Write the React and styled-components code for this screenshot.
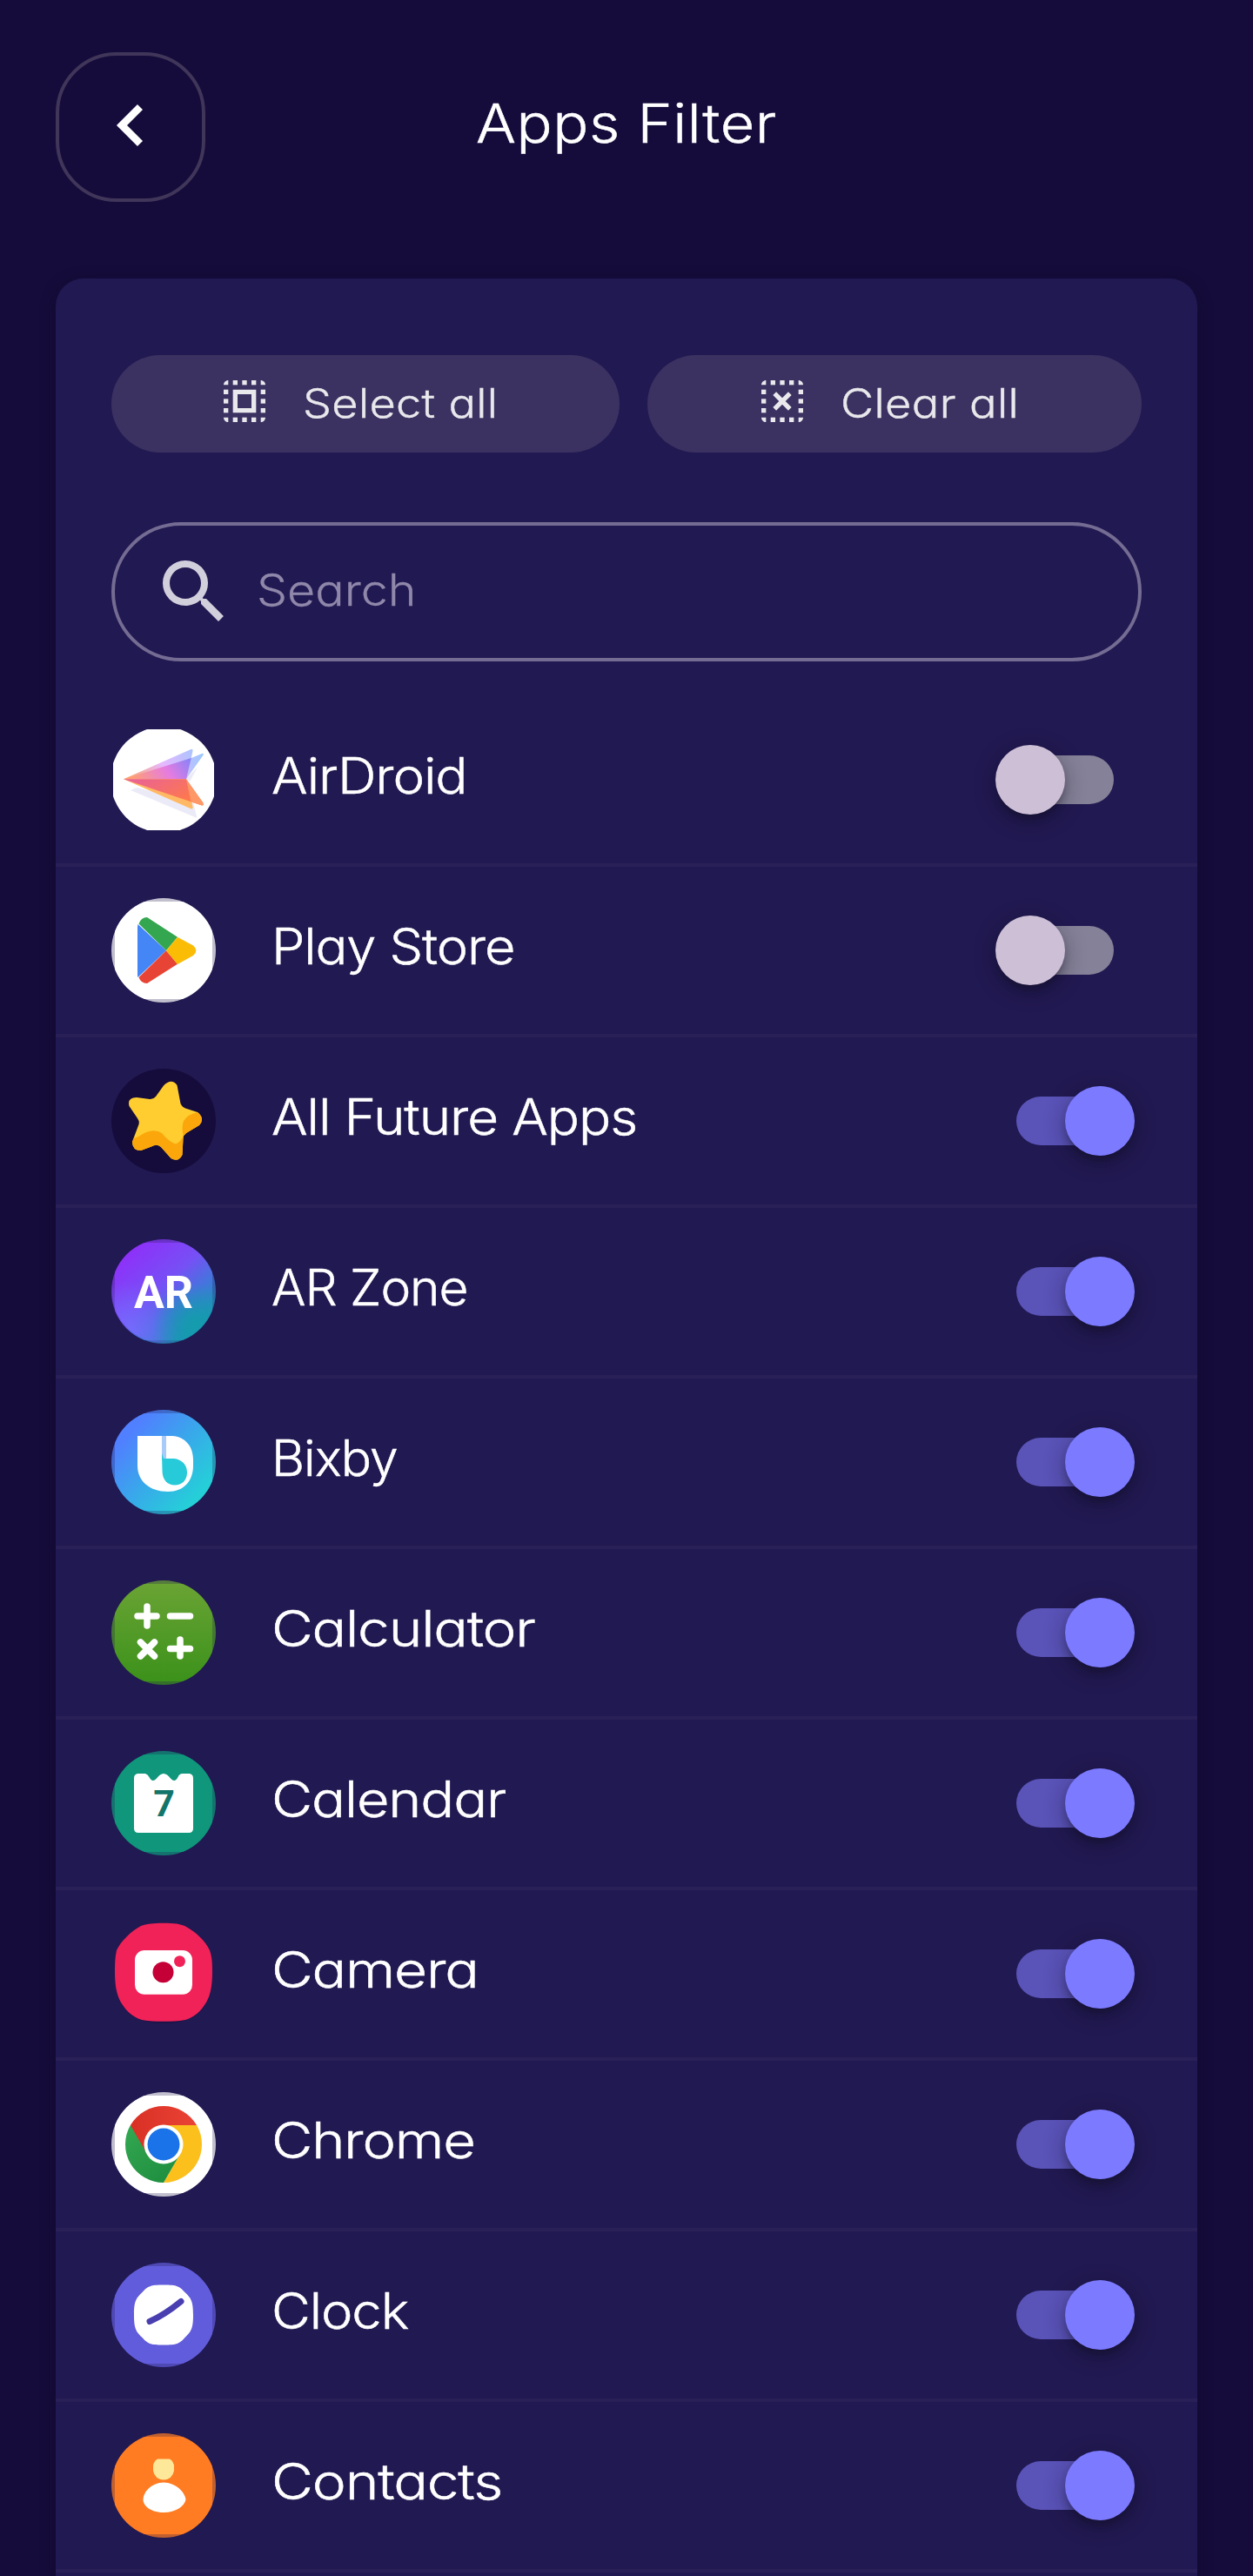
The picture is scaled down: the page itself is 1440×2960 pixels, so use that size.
import React, { useState } from "react";
import styled, { createGlobalStyle } from "styled-components";

const GlobalStyle = createGlobalStyle`
  *, *::before, *::after { box-sizing: border-box; }
  html, body { margin: 0; padding: 0; background: #150c3b; }
  body {
    font-family: Inter, "Open Sans", sans-serif;
    font-weight: 300;
    font-feature-settings: "cv11" 1, "kern" 1;
    color: #fff;
  }
  button, input { font: inherit; font-feature-settings: inherit; color: inherit; }
  svg { display: block; flex: none; }
`;

const Screen = styled.main`
  width: 1440px;
  height: 2960px;
  overflow: hidden;
  padding: 0 64px;
  background: #150c3b;
`;

const Header = styled.header`
  display: grid;
  grid-template-columns: 172px 1fr 172px;
  height: 320px;
  padding-top: 60px;
`;

const BackButton = styled.button`
  display: flex;
  align-items: center;
  justify-content: center;
  width: 172px;
  height: 172px;
  padding: 0 2px 4px 0;
  border: 4px solid #403659;
  border-radius: 70px;
  background: transparent;
`;

const Title = styled.h1`
  margin: 0;
  padding-bottom: 9px;
  height: 172px;
  line-height: 163px;
  text-align: center;
  font-size: 61.5px;
  font-weight: 300;
  letter-spacing: 0.5px;
  -webkit-text-stroke: 0.5px currentColor;
  transform: scaleX(1.11);
`;

const Panel = styled.section`
  height: 2680px;
  padding-top: 88px;
  border-radius: 32px 32px 0 0;
  background: #211951;
  box-shadow: 0 4px 16px rgba(16, 10, 40, 0.55);
`;

const Actions = styled.div`
  display: grid;
  grid-template-columns: 584px 568px;
  gap: 32px;
  padding: 0 64px;
`;

const PillButton = styled.button`
  display: flex;
  align-items: center;
  gap: 35px;
  height: 112px;
  padding: 0 0 0 ${(p) => p.$inset}px;
  border: 0;
  border-radius: 56px;
  background: #3b3261;
  color: #e9e8ec;
  font-size: 46px;
  font-weight: 300;
  letter-spacing: 0.3px;

  svg { margin-bottom: 7px; }
`;

const PillLabel = styled.span`
  padding-bottom: 2px;
  -webkit-text-stroke: 0.4px currentColor;
  transform: scaleX(${(p) => p.$stretch});
  transform-origin: left;
`;

const SearchBox = styled.label`
  display: flex;
  align-items: center;
  gap: 24px;
  height: 160px;
  margin: 80px 64px 40px;
  padding: 0 60px 0 43px;
  border: 4px solid #756c93;
  border-radius: 80px;
  color: #d2cfdc;
`;

const SearchInput = styled.input`
  width: 800px;
  height: 100px;
  padding: 0 0 5px;
  border: 0;
  outline: 0;
  background: transparent;
  font-size: 50px;
  letter-spacing: 0;
  transform: scaleX(1.11);
  transform-origin: left;

  &::placeholder {
    color: #9088aa;
    opacity: 1;
    -webkit-text-stroke: 0.3px #9088aa;
  }
`;

const List = styled.ul`
  margin: 0;
  padding: 0;
  list-style: none;
`;

const Row = styled.li`
  display: flex;
  align-items: center;
  height: 196px;
  padding: 0 96px 0 64px;
  border-bottom: 4px solid #292057;
`;

const AppName = styled.span`
  flex: 1;
  margin-left: 64px;
  padding-bottom: 8px;
  font-size: 57px;
  line-height: 80px;
  white-space: nowrap;
  letter-spacing: -1px;
  -webkit-text-stroke: 0.5px currentColor;
  transform: scaleX(${(p) => p.$stretch});
  transform-origin: left;
`;

const Track = styled.button`
  display: flex;
  align-items: center;
  justify-content: ${(p) => (p.$on ? "flex-end" : "flex-start")};
  width: 112px;
  height: 56px;
  padding: 0;
  border: 0;
  border-radius: 28px;
  background: ${(p) => (p.$on ? "#5a53b8" : "#858198")};
`;

const Thumb = styled.span`
  flex: none;
  width: 80px;
  height: 80px;
  margin: 0 -24px;
  border-radius: 50%;
  background: ${(p) => (p.$on ? "#7c7aff" : "#cdbfd6")};
  box-shadow: 0 8px 10px -4px rgba(16, 14, 30, 0.45), 0 6px 24px rgba(16, 14, 30, 0.4);
`;

const DOTS = [];
[3, 7, 11, 15, 19].forEach((x) =>
  [3, 7, 11, 15, 19].forEach((y) => {
    if (x === 3 || x === 19 || y === 3 || y === 19) DOTS.push([x, y]);
  })
);
const CORNERS = {
  "3,3": "M5 3v2H3c0-1.1.9-2 2-2z",
  "19,3": "M19 3v2h2c0-1.1-.9-2-2-2z",
  "3,19": "M3 19h2v2c-1.1 0-2-.9-2-2z",
  "19,19": "M19 19h2c0 1.1-.9 2-2 2z",
};

function SelectionIcon({ children }) {
  return (
    <svg width="64" height="64" viewBox="0 0 24 24" fill="currentColor">
      {DOTS.map(([x, y]) => (
        <path key={`${x}-${y}`} d={CORNERS[`${x},${y}`] || `M${x} ${y}h2v2h-2z`} />
      ))}
      {children}
    </svg>
  );
}

function Badge({ id, fill, defs, children }) {
  return (
    <svg width="120" height="120" viewBox="0 0 120 120">
      <defs>
        <clipPath id={`${id}-clip`}>
          <rect x="4" y="4" width="112" height="112" />
        </clipPath>
        {defs}
      </defs>
      <circle cx="60" cy="60" r="60" fill={fill} opacity="0.72" />
      <circle cx="60" cy="60" r="60" fill={fill} clipPath={`url(#${id}-clip)`} />
      {children}
    </svg>
  );
}

const AirDroidIcon = () => (
  <svg width="120" height="120" viewBox="0 0 120 120">
    <defs>
      <clipPath id="air-clip">
        <rect x="2" y="2" width="116" height="116" />
      </clipPath>
      <linearGradient id="air-back" x1="14" y1="59" x2="104" y2="26" gradientUnits="userSpaceOnUse">
        <stop offset="0" stopColor="#ffa35c" />
        <stop offset="0.5" stopColor="#e6b8ff" />
        <stop offset="1" stopColor="#9cc8ff" />
      </linearGradient>
      <linearGradient id="air-front" x1="30" y1="70" x2="90" y2="30" gradientUnits="userSpaceOnUse">
        <stop offset="0" stopColor="#ffa070" />
        <stop offset="0.55" stopColor="#e67ce0" />
        <stop offset="1" stopColor="#7f83fa" />
      </linearGradient>
      <linearGradient id="air-low" x1="0" y1="0" x2="1" y2="0.6">
        <stop offset="0" stopColor="#e8609c" />
        <stop offset="1" stopColor="#ff7a48" />
      </linearGradient>
    </defs>
    <circle cx="60" cy="60" r="61" fill="#fff" clipPath="url(#air-clip)" />
    <path d="M24 69 L86 95 L98.500 104 L94 86z M22 72 L98.500 104 L93 86 L30 69z M86 59 L99.500 45 L90 62z" fill="#ebeaf7" />
    <path d="M14 59.300 L92 24.700 Q94 24.500 93.500 27 L91.800 35 L104.500 29.700 Q107 29.700 105 32.500 L86 59.300z" fill="url(#air-back)" />
    <path d="M14 59.300 L91.800 35 L86 59.300z" fill="url(#air-front)" />
    <path d="M14 59.300 L92 93.500 Q94 93.500 93.500 91 L86 59.300z" fill="#ffb964" />
    <path d="M14 59.300 L104 89.500 Q107 89.500 105 86 L86 59.300z" fill="url(#air-low)" />
    <path d="M86 59.300 L91.500 85.300 L104 89.500 Q107 89.500 105 86z" fill="#ff9866" />
  </svg>
);

const PlayIcon = () => (
  <Badge id="play" fill="#fff">
    <path d="M30.500 30 L63 60.300 L30.500 91 Q30 90 30 88 V33z" fill="#4486f6" />
    <path d="M31.500 29.500 Q34 22 41 22 L76 44.700 L63 60.300z" fill="#34a650" />
    <path d="M31.500 91 Q34 98 41 98 L76 75.700 L63 60.300z" fill="#e84435" />
    <path d="M76 44.700 L94 54.500 Q101 60.300 94 66 L76 76 L63 60.300z" fill="#fbbc06" />
  </Badge>
);

const STAR =
  "M60 19.500 Q69 10.500 75.500 19 L79.500 40 Q81 44 85 45.500 L99 50 Q108 57 101 65 L86 74 Q83 76 82.500 80 L81.500 99 Q77 108 68.500 103 L57 90 Q52 86 46 89.500 L34 94 Q24 94 24 84 L31.500 64 Q32.500 60.500 30 57 L20.500 43 Q18 33 29 33 L44 35 Q48 35.500 51 32z";

const StarIcon = () => (
  <svg width="120" height="120" viewBox="0 0 120 120">
    <defs>
      <clipPath id="star-clip">
        <path d={STAR} />
      </clipPath>
    </defs>
    <circle cx="60" cy="60" r="60" fill="#150c3b" />
    <g clipPath="url(#star-clip)">
      <rect width="120" height="120" fill="#ffcd30" />
      <path d="M100 50 Q88 52 83 60 Q80 68 83 78 L112 70z" fill="#fba60b" />
      <path d="M18 81 Q28 81 36 75 Q49 68 58 74 Q66 84 74 86.500 Q80 84 83 76 L86 112 L16 110z" fill="#fba60b" />
    </g>
  </svg>
);

const ArIcon = () => (
  <Badge
    id="ar"
    fill="url(#ar-bg)"
    defs={
      <>
        <linearGradient id="ar-bg" x1="0.15" y1="0.1" x2="0.85" y2="0.9">
          <stop offset="0" stopColor="#8f2ff9" />
          <stop offset="0.45" stopColor="#7650f5" />
          <stop offset="0.7" stopColor="#4276dc" />
          <stop offset="1" stopColor="#129cac" />
        </linearGradient>
        <radialGradient id="ar-low" cx="0.15" cy="0.9" r="0.5">
          <stop offset="0" stopColor="#786cff" stopOpacity="0.9" />
          <stop offset="1" stopColor="#786cff" stopOpacity="0" />
        </radialGradient>
        <radialGradient id="ar-teal" cx="0.8" cy="0.82" r="0.4">
          <stop offset="0" stopColor="#149cad" />
          <stop offset="1" stopColor="#149cad" stopOpacity="0" />
        </radialGradient>
      </>
    }
  >
    <circle cx="60" cy="60" r="59" fill="url(#ar-low)" />
    <circle cx="60" cy="60" r="59" fill="url(#ar-teal)" />
    <text x="26" y="78.500" fill="#fff" fontFamily="Roboto, sans-serif" fontWeight="700" fontSize="51" textLength="68" lengthAdjust="spacingAndGlyphs">
      AR
    </text>
  </Badge>
);

const BixbyIcon = () => (
  <Badge
    id="bixby"
    fill="url(#bixby-bg)"
    defs={
      <linearGradient id="bixby-bg" x1="0.15" y1="0.25" x2="0.8" y2="0.85">
        <stop offset="0" stopColor="#5080ff" />
        <stop offset="0.5" stopColor="#38a9ea" />
        <stop offset="1" stopColor="#25cfd8" />
      </linearGradient>
    }
  >
    <path d="M30 30 H70 C85 31 94 42 94 58 V64 C94 82 83 94 65 94 C44 94 30 82 30 64z" fill="#fff" />
    <path d="M58 30h5v28h-5z" fill="#a9cbfa" />
    <path d="M60 56 H72 C81 57 87 63 87 72 C87 81 81 86.500 73 86.500 C64 86.500 58.500 80 58.500 70 L58 50z" fill="#27cad9" />
  </Badge>
);

const CalculatorIcon = () => (
  <Badge
    id="calc"
    fill="url(#calc-bg)"
    defs={
      <linearGradient id="calc-bg" x1="0" y1="0" x2="0" y2="1">
        <stop offset="0" stopColor="#6ba435" />
        <stop offset="1" stopColor="#3a911a" />
      </linearGradient>
    }
  >
    <g stroke="#fff" strokeWidth="7.500" strokeLinecap="round">
      <path d="M30 41h22M41 30v22M67.500 41h23M33.500 71l16 16M49.500 71l-16 16M67.500 78.500h23M79 68v19" />
    </g>
  </Badge>
);

const CalendarIcon = () => (
  <Badge id="cal" fill="#0f967b">
    <path d="M30 26 H39 Q42 27 43.500 30 Q47 37 51.500 32 Q56 26 60 26 Q64 26 68.500 32 Q73 37 76.500 30 Q78 26 82 26 H90 Q94 27 94 31 V89 Q94 94 89 94 H31 Q26 94 26 89 V31 Q26 27 30 26z" fill="#fff" />
    <text x="60.500" y="75" textAnchor="middle" fill="#137469" fontFamily="Roboto, sans-serif" fontWeight="700" fontSize="43">
      7
    </text>
  </Badge>
);

const CameraIcon = () => (
  <svg width="120" height="120" viewBox="0 0 120 120">
    <path d="M60 5 C98 5 116 23 116 61 C116 99 98 117 60 117 C22 117 4 99 4 61 C4 23 22 5 60 5z" fill="#150c3b" opacity="0.35" />
    <path d="M60 1.700 C72 1.700 80 2.500 86 6 C97 12 108 22 113 33 C116 42 116 49 116 58 C116 74 114 84 109 93 C103 103 95 110 85 113 C77 114.700 69 114.700 60 114.700 C51 114.700 43 114.700 35 113 C25 110 17 103 11 93 C6 84 4 74 4 58 C4 49 4 42 6 33 C11 22 23 11 34 5 C40 2.500 48 1.700 60 1.700z" fill="#f02257" />
    <rect x="27" y="33" width="66" height="50.700" rx="11" fill="#fff" />
    <circle cx="59.500" cy="58.300" r="12" fill="#c40037" />
    <circle cx="78.500" cy="45.700" r="6.500" fill="#f02257" />
  </svg>
);

const ChromeIcon = () => (
  <Badge
    id="chrome"
    fill="#fff"
    defs={
      <>
        <linearGradient id="chrome-red" x1="0" y1="0" x2="1" y2="0">
          <stop offset="0" stopColor="#d93025" />
          <stop offset="1" stopColor="#ea4335" />
        </linearGradient>
        <linearGradient id="chrome-green" x1="0" y1="0" x2="0.8" y2="1">
          <stop offset="0" stopColor="#34a853" />
          <stop offset="1" stopColor="#1e8e3e" />
        </linearGradient>
      </>
    }
  >
    <path d="M60 60 L98.100 38 A44 44 0 0 1 60 104 L79 71z M60 38 H98.100 L79 71z" fill="#fcc01c" />
    <path d="M60 60 L21.900 38 A44 44 0 0 0 60 104 L79.100 71z" fill="url(#chrome-green)" />
    <path d="M21.900 38 A44 44 0 0 1 98.100 38 H60 L41 71z" fill="url(#chrome-red)" />
    <circle cx="60" cy="60" r="22.500" fill="#fff" />
    <circle cx="60" cy="60" r="18.500" fill="#1a73e8" />
  </Badge>
);

const ClockIcon = () => (
  <Badge id="clock" fill="#615cdb">
    <path d="M60 25.500 C76 25.500 78 27 84.500 34 C92 41 94 45 94 60 C94 75 92 79 84.500 86 C78 93 76 94.500 60 94.500 C44 94.500 42 93 35.500 86 C28 79 26 75 26 60 C26 45 28 41 35.500 34 C42 27 44 25.500 60 25.500z" fill="#fff" />
    <path d="M44 67.500 Q61 60 80 44.500" fill="none" stroke="#4a3fb0" strokeWidth="7" strokeLinecap="round" />
  </Badge>
);

const ContactsIcon = () => (
  <Badge id="contacts" fill="#ff7c22">
    <path d="M53 29.500 H67 Q72 33 72 38 V43 Q70 53 60 53.500 Q50 53 48 43 V38 Q48 33 53 29.500z" fill="#fde89a" />
    <path d="M60 56.500 C74 57 84 67 85.500 76 C84 84 74 91 60 91 C46 91 36.500 84 36.500 76 C37 67 46 57 60 56.500z" fill="#fff" />
  </Badge>
);

const APPS = [
  { name: "AirDroid", Icon: AirDroidIcon, on: false, stretch: 1.085 },
  { name: "Play Store", Icon: PlayIcon, on: false, stretch: 1.074 },
  { name: "All Future Apps", Icon: StarIcon, on: true, stretch: 1.086 },
  { name: "AR Zone", Icon: ArIcon, on: true, stretch: 1.028 },
  { name: "Bixby", Icon: BixbyIcon, on: true, stretch: 1.029 },
  { name: "Calculator", Icon: CalculatorIcon, on: true, stretch: 1.151 },
  { name: "Calendar", Icon: CalendarIcon, on: true, stretch: 1.137 },
  { name: "Camera", Icon: CameraIcon, on: true, stretch: 1.151 },
  { name: "Chrome", Icon: ChromeIcon, on: true, stretch: 1.14 },
  { name: "Clock", Icon: ClockIcon, on: true, stretch: 1.079 },
  { name: "Contacts", Icon: ContactsIcon, on: true, stretch: 1.155 },
];

export default function App() {
  const [enabled, setEnabled] = useState(() => APPS.map((a) => a.on));
  const toggle = (i) => setEnabled((prev) => prev.map((v, j) => (j === i ? !v : v)));

  return (
    <>
      <GlobalStyle />
      <Screen>
        <Header>
          <BackButton aria-label="Back">
            <svg width="32" height="50" viewBox="0 0 32 50" fill="none" stroke="#fff" strokeWidth="8.500">
              <path d="M28 4 L7 25 L28 46" />
            </svg>
          </BackButton>
          <Title>Apps Filter</Title>
        </Header>
        <Panel>
          <Actions>
            <PillButton $inset={121} onClick={() => setEnabled(APPS.map(() => true))}>
              <SelectionIcon>
                <path fillRule="evenodd" d="M7 7h10v10H7z M9 9v6h6V9z" />
              </SelectionIcon>
              <PillLabel $stretch={1.135}>Select all</PillLabel>
            </PillButton>
            <PillButton $inset={123} onClick={() => setEnabled(APPS.map(() => false))}>
              <SelectionIcon>
                <path d="M8.700 8.700l6.600 6.600M15.300 8.700l-6.600 6.600" stroke="currentColor" strokeWidth="2" />
              </SelectionIcon>
              <PillLabel $stretch={1.14}>Clear all</PillLabel>
            </PillButton>
          </Actions>
          <SearchBox>
            <svg width="96" height="96" viewBox="0 0 24 24" fill="currentColor">
              <path d="M15.500 14h-.79l-.28-.27A6.471 6.471 0 0 0 16 9.500 6.500 6.500 0 1 0 9.500 16c1.610 0 3.090-.59 4.230-1.570l.27.28v.79l5 4.990L20.490 19l-4.990-5zm-6 0C7.010 14 5 11.990 5 9.500S7.010 5 9.500 5 14 7.010 14 9.500 11.990 14 9.500 14z" />
            </svg>
            <SearchInput placeholder="Search" />
          </SearchBox>
          <List>
            {APPS.map(({ name, Icon, stretch }, i) => (
              <Row key={name}>
                <Icon />
                <AppName $stretch={stretch}>{name}</AppName>
                <Track role="switch" aria-checked={enabled[i]} aria-label={name} $on={enabled[i]} onClick={() => toggle(i)}>
                  <Thumb $on={enabled[i]} />
                </Track>
              </Row>
            ))}
          </List>
        </Panel>
      </Screen>
    </>
  );
}
